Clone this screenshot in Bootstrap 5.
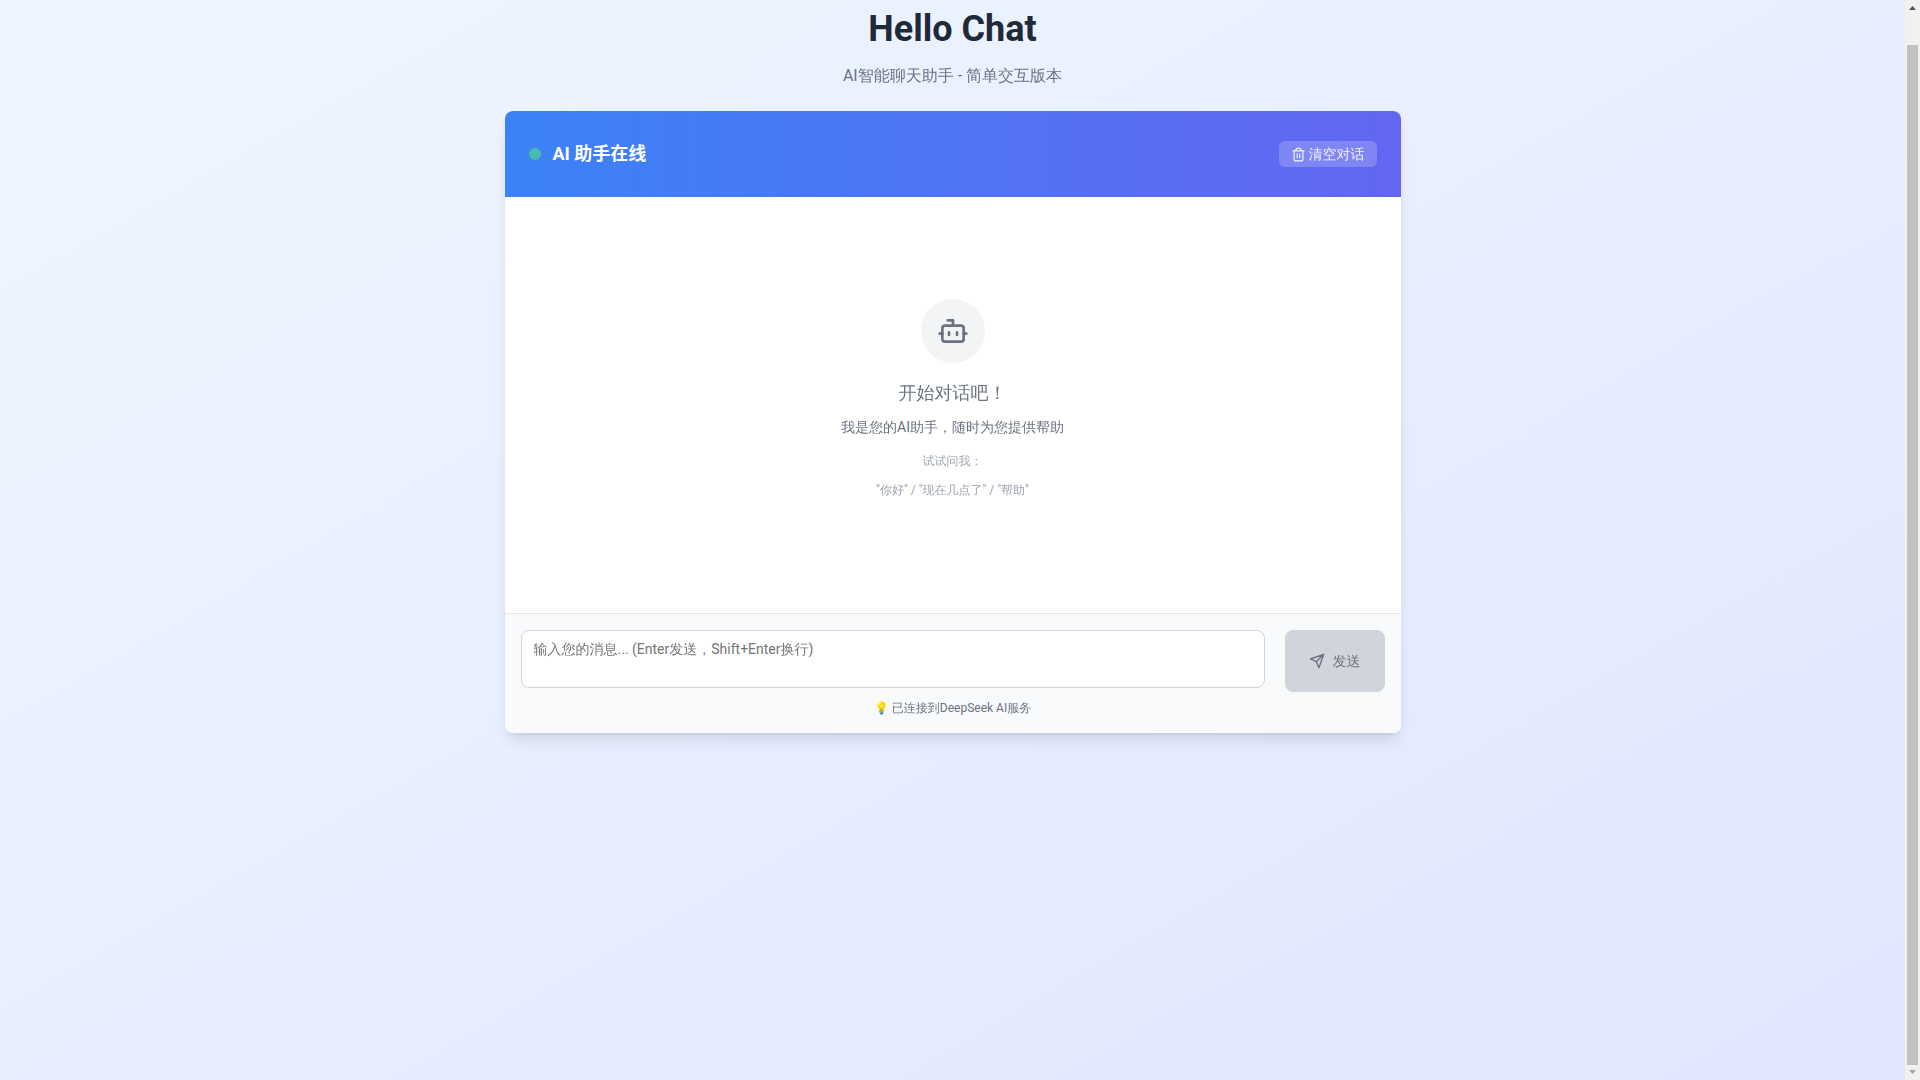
<!DOCTYPE html>
<html lang="zh-CN">
<head>
<meta charset="utf-8">
<meta name="viewport" content="width=device-width, initial-scale=1">
<title>Hello Chat</title>
<link href="https://cdn.jsdelivr.net/npm/bootstrap@5.3.0/dist/css/bootstrap.min.css" rel="stylesheet">
<style>
body { font-family: Roboto, "WenQuanYi Zen Hei", "WenQuanYi Micro Hei", "Droid Sans Fallback", "Noto Sans CJK SC", sans-serif; font-size: 14px; line-height: 24px; background: #f1f1f1; }
.page-bg { background: linear-gradient(to bottom right, #eff6ff, #e0e7ff); padding-top: 7px; }
.page-title { font-size: 36px; line-height: 44px; color: #1f2937; margin-bottom: 12px; }
.page-sub { font-size: 16px; line-height: 26px; color: #6b7280; margin-bottom: 22px; }
.chat-card { max-width: 896px; border-radius: 8px; box-shadow: 0 10px 15px -3px rgba(0,0,0,.1), 0 4px 6px -4px rgba(0,0,0,.1); }
.chat-head { background: linear-gradient(to right, #3b82f6, #6366f1); padding: 30px 24px; }
.status-dot { width: 12px; height: 12px; background: #48bbaf; }
.chat-title { font-family: Roboto, "Noto Sans CJK SC", sans-serif; font-size: 18px; line-height: 26px; }
.btn-clear { font-size: 14px; line-height: 20px; padding: 3px 12px; gap: 3px; border: 0; border-radius: 6px; color: rgba(255,255,255,.9); background: rgba(255,255,255,.2); }
.chat-body { min-height: 416px; color: #6b7280; }
.bot-circle { width: 64px; height: 64px; background: #f3f4f6; }
.welcome { font-size: 18px; line-height: 28px; }
.intro { margin-bottom: 12px; }
.hint { font-size: 12px; line-height: 20px; color: #9ca3af; margin-bottom: 9px; }
.hint-last { margin-bottom: 12px; }
.chat-foot { background: #f9fafb; border-top: 1px solid #e5e7eb; }
.msg-input { height: 58px; font-size: 14px; line-height: 20px; padding: 8px 12px; border: 1px solid #d1d5db; border-radius: 8px; resize: none; }
.msg-input::placeholder { color: #757575; }
.btn-send { width: 100px; height: 62px; font-size: 14px; line-height: 20px; border-radius: 8px; }
.btn-send:disabled { background: #d1d5db; border-color: #d1d5db; color: #6b7280; opacity: 1; }
.service { font-size: 12px; line-height: 17px; color: #6b7280; }
.scroll-rail { width: 15px; background: #f1f1f1; }
.scroll-thumb { width: 11px; background: #c1c1c1; }
</style>
<script src="https://cdn.jsdelivr.net/npm/bootstrap@5.3.0/dist/js/bootstrap.bundle.min.js"></script>
</head>
<body>
<div class="d-flex min-vh-100">
  <main class="page-bg flex-grow-1">
    <header class="text-center">
      <h1 class="page-title fw-bold">Hello Chat</h1>
      <p class="page-sub">AI智能聊天助手 - 简单交互版本</p>
    </header>
    <section class="chat-card mx-auto overflow-hidden bg-white">
      <div class="chat-head d-flex justify-content-between align-items-center text-white">
        <div class="d-flex align-items-center gap-2">
          <span class="status-dot rounded-circle me-1"></span>
          <h2 class="chat-title fw-bold mb-0">AI 助手在线</h2>
        </div>
        <button type="button" class="btn btn-clear d-flex align-items-center">
          <svg width="15" height="15" viewBox="0 0 24 24" fill="none" stroke="currentColor" stroke-width="2" stroke-linecap="round" stroke-linejoin="round" aria-hidden="true"><path d="M3 6h18M19 6v14a2 2 0 0 1-2 2H7a2 2 0 0 1-2-2V6M8 6V4a2 2 0 0 1 2-2h4a2 2 0 0 1 2 2v2M10 11v6M14 11v6"/></svg>
          清空对话
        </button>
      </div>
      <div class="chat-body d-flex flex-column align-items-center justify-content-center text-center">
        <div class="bot-circle rounded-circle d-flex align-items-center justify-content-center mb-3">
          <svg width="32" height="32" viewBox="0 0 24 24" fill="none" stroke="currentColor" stroke-width="2" stroke-linecap="round" stroke-linejoin="round" aria-hidden="true"><path d="M12 8V4H8"/><rect x="4" y="8" width="16" height="12" rx="2"/><path d="M2 14h2M20 14h2M15 13v2M9 13v2"/></svg>
        </div>
        <p class="welcome mb-2">开始对话吧！</p>
        <p class="intro">我是您的AI助手，随时为您提供帮助</p>
        <p class="hint">试试问我：</p>
        <p class="hint hint-last">"你好" / "现在几点了" / "帮助"</p>
      </div>
      <form class="chat-foot p-3">
        <div class="d-flex align-items-start gap-3">
          <textarea class="msg-input form-control flex-grow-1" rows="2" aria-label="消息" placeholder="输入您的消息... (Enter发送，Shift+Enter换行)"></textarea>
          <button type="submit" class="btn btn-send ms-1 flex-shrink-0 d-flex align-items-center justify-content-center gap-2" disabled>
            <svg width="16" height="16" viewBox="0 0 24 24" fill="none" stroke="currentColor" stroke-width="2" stroke-linecap="round" stroke-linejoin="round" aria-hidden="true"><path d="m22 2-7 20-4-9-9-4ZM22 2 11 13"/></svg>
            发送
          </button>
        </div>
        <p class="service text-center mt-2 mb-0">💡 已连接到DeepSeek AI服务</p>
      </form>
    </section>
  </main>
  <div class="scroll-rail flex-shrink-0 d-flex flex-column align-items-center" aria-hidden="true">
    <svg width="15" height="45" viewBox="0 0 15 45"><path d="M4 10h7L7.500 6z" fill="#505050"/></svg>
    <div class="scroll-thumb flex-grow-1"></div>
    <svg width="15" height="15" viewBox="0 0 15 15"><path d="M4 5h7L7.500 9z" fill="#a3a3a3"/></svg>
  </div>
</div>
</body>
</html>
